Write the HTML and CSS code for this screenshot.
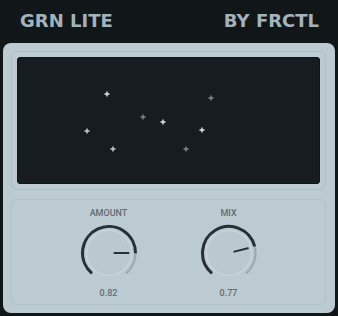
FILE: index.html
```html
<!DOCTYPE html>
<html>
<head>
<meta charset="utf-8">
<link rel="stylesheet" href="styles.css">
</head>
<body>
<header class="top">
  <div class="brand">GRN LITE</div>
  <div class="brand">BY FRCTL</div>
</header>
<main class="panel">
  <section class="display">
    <div class="screen">
      <svg class="stars" viewBox="0 0 304 127" width="304" height="127">
        <g stroke-width="1.4" fill="none">
          <path class="bright" d="M87.5 37h5M90 34.5v5"/>
          <path class="dim" d="M123.5 60h5M126 57.5v5"/>
          <path class="bright" d="M143.5 65h5M146 62.5v5"/>
          <path class="mid" d="M67.5 74h5M70 71.5v5"/>
          <path class="mid" d="M93.5 92h5M96 89.5v5"/>
          <path class="dim" d="M191.5 41h5M194 38.5v5"/>
          <path class="bright" d="M182.5 73h5M185 70.5v5"/>
          <path class="dim" d="M166.5 92h5M169 89.5v5"/>
        </g>
      </svg>
    </div>
  </section>
  <section class="controls">
    <div class="knob-col">
      <div class="label">AMOUNT</div>
      <svg class="knob" viewBox="0 0 60 60" width="60" height="60">
        <path class="track" d="M12.97 50.30 A26.5 26.5 0 1 1 47.03 50.30"/>
        <path class="value" d="M12.97 50.30 A26.5 26.5 0 1 1 56.50 30.19"/>
        <circle class="face" cx="30" cy="30" r="22.5"/>
        <path class="needle" d="M35.5 30.03 L49.5 30.1"/>
      </svg>
      <div class="val">0.82</div>
    </div>
    <div class="knob-col">
      <div class="label">MIX</div>
      <svg class="knob" viewBox="0 0 60 60" width="60" height="60">
        <path class="track" d="M12.97 50.30 A26.5 26.5 0 1 1 47.03 50.30"/>
        <path class="value" d="M12.97 50.30 A26.5 26.5 0 1 1 55.67 23.41"/>
        <circle class="face" cx="30" cy="30" r="22.5"/>
        <path class="needle" d="M35.33 28.64 L48.89 25.17"/>
      </svg>
      <div class="val">0.77</div>
    </div>
  </section>
</main>
</body>
</html>
```
FILE: styles.css
```css
* { box-sizing: border-box; }
html, body { margin: 0; padding: 0; }
body {
  background: #111619;
  width: 338px;
  height: 316px;
  overflow: hidden;
  font-family: Roboto, "Liberation Sans", sans-serif;
}
.top {
  height: 43px;
  display: flex;
  justify-content: space-between;
  align-items: flex-start;
  padding: 11px 19px 0 20px;
}
.brand {
  font-family: "DejaVu Sans", sans-serif;
  font-weight: 700;
  font-size: 18px;
  line-height: 20px;
  color: #a4b3bb;
}
.panel {
  margin: 0 3px;
  height: 270px;
  background: #bccbd2;
  border-radius: 8px;
  padding: 8px 9px 8px 8px;
  display: flex;
  flex-direction: column;
  gap: 9px;
}
.display {
  border: 1px solid #afbfc6;
  border-radius: 6px;
  padding: 5px;
}
.screen {
  height: 127px;
  background: #171c20;
  border-radius: 4px;
  box-shadow: inset 0 0 0 1px #12161a;
  position: relative;
}
.stars { position: absolute; left: 0; top: 0; display: block; }
.bright { stroke: #e2e7ea; }
.mid { stroke: #c9d0d4; }
.dim { stroke: #7f898f; }
.controls {
  flex: 1;
  border: 1px solid #b2c1c8;
  border-radius: 6px;
  display: flex;
  justify-content: center;
  gap: 58px;
  padding-top: 8px;
}
.knob-col {
  width: 62px;
  display: flex;
  flex-direction: column;
  align-items: center;
}
.label, .val {
  font-size: 9px;
  line-height: 11px;
  font-weight: 500;
  color: #5f6c73;
}
.knob { display: block; margin-top: 4px; }
.val { margin-top: 5px; }
.track { fill: none; stroke: #9aa9b0; stroke-width: 2.2; }
.value { fill: none; stroke: #263035; stroke-width: 3; }
.face { fill: #bac9cf; stroke: #cad6db; stroke-width: 1.2; }
.needle { stroke: #263035; stroke-width: 2; stroke-linecap: round; }
```
